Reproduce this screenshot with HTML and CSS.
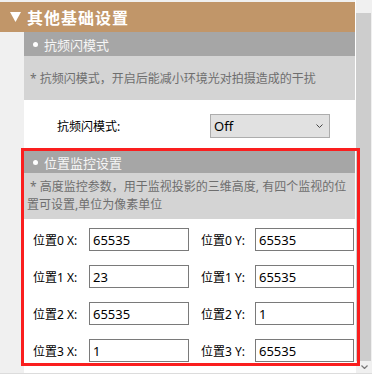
FILE: index.html
```html
<!DOCTYPE html>
<html lang="zh-CN">
<head>
    <meta charset="UTF-8">
    <meta name="viewport" content="width=device-width, initial-scale=1.0">
    <title>其他基础设置</title>
    <link rel="stylesheet" href="styles.css">
</head>
<body>
    <div class="window">
        <div class="main">
            <!-- Group header -->
            <div class="group-head">
                <svg viewBox="0 0 11 10" aria-hidden="true"><polygon points="0,0 11,0 5.5,10" fill="#fff"/></svg>
                <span>其他基础设置</span>
            </div>

            <div class="group-body">
                <!-- Anti flicker -->
                <section class="block">
                    <div class="block-title"><span class="dot"></span>抗频闪模式</div>
                    <div class="block-desc">&nbsp;* 抗频闪模式，开启后能减小环境光对拍摄造成的干扰</div>
                    <div class="field-row">
                        <label>抗频闪模式:</label>
                        <div class="select">
                            <span>Off</span>
                            <svg viewBox="0 0 7 4" aria-hidden="true"><polyline points="0.5,0.5 3.5,3.5 6.5,0.5" fill="none" stroke="#444" stroke-width="1"/></svg>
                        </div>
                    </div>
                </section>

                <!-- Position monitor -->
                <section class="block highlight">
                    <div class="block-title"><span class="dot"></span>位置监控设置</div>
                    <div class="block-desc">&nbsp;* 高度监控参数，用于监视投影的三维高度, 有四个监视的位<br>置可设置,单位为像素单位</div>
                    <div class="pos-grid">
                        <label>位置0 X:</label><input type="text" value="65535">
                        <label class="ylabel">位置0 Y:</label><input type="text" value="65535">
                        <label>位置1 X:</label><input type="text" value="23">
                        <label class="ylabel">位置1 Y:</label><input type="text" value="65535">
                        <label>位置2 X:</label><input type="text" value="65535">
                        <label class="ylabel">位置2 Y:</label><input type="text" value="1">
                        <label>位置3 X:</label><input type="text" value="1">
                        <label class="ylabel">位置3 Y:</label><input type="text" value="65535">
                    </div>
                </section>
            </div>
        </div>

        <!-- Scrollbar -->
        <div class="scrollbar">
            <div class="sb-top"></div>
            <div class="sb-track"></div>
            <div class="sb-bottom">
                <svg viewBox="0 0 7 4" aria-hidden="true"><polyline points="0.5,0.5 3.5,3.5 6.5,0.5" fill="none" stroke="#777" stroke-width="1.2"/></svg>
            </div>
        </div>
    </div>
</body>
</html>
```

FILE: styles.css
```css
* {
    box-sizing: border-box;
}

body {
    margin: 0;
    font-family: "Noto Sans", "Noto Sans CJK SC", sans-serif;
    background-color: #fff;
    color: #000;
}

.window {
    display: flex;
    height: 374px;
    background-color: #f0f0f0;
    border-bottom: 1px solid #dcdcdc;
}

.main {
    width: 355px;
    padding-top: 2px;
}

/* Group header */
.group-head {
    height: 30px;
    display: flex;
    align-items: center;
    padding-left: 10px;
    background-color: #c19669;
    color: #fff;
    font-size: 16px;
    font-weight: bold;
    letter-spacing: 1px;
}

.group-head svg {
    width: 11px;
    height: 10px;
    margin-right: 6px;
}

.group-body {
    margin-left: 24px;
    padding-bottom: 7px;
    background-color: #fff;
}

/* Blocks */
.block-title {
    height: 24px;
    display: flex;
    align-items: center;
    padding-left: 9px;
    background-color: #a6a6a6;
    color: #f6f6f6;
    font-size: 13px;
}

.dot {
    width: 5px;
    height: 5px;
    margin-right: 6px;
    border-radius: 50%;
    background-color: #fff;
}

.block-desc {
    padding: 14px 3px 12px;
    background-color: #d4d4d4;
    color: #6e6e6e;
    font-size: 12px;
    line-height: 18px;
}

.field-row {
    height: 48px;
    display: flex;
    align-items: center;
    padding-top: 4px;
    padding-left: 33px;
    font-size: 12px;
}

.field-row label {
    width: 153px;
}

.select {
    width: 120px;
    height: 24px;
    display: flex;
    align-items: center;
    justify-content: space-between;
    padding: 0 6px 0 3px;
    background-color: #e1e1e1;
    border: 1px solid #adadad;
    font-size: 13px;
}

.select svg {
    width: 7px;
    height: 4px;
}

/* Highlighted block */
.highlight {
    position: relative;
    z-index: 1;
    width: 339px;
    margin-left: -3px;
    border: 3px solid #fa1e1e;
}

.highlight .block-title {
    height: 22px;
    margin-right: 2px;
}

.highlight .block-desc {
    margin-right: 2px;
    padding: 5px 3px;
}

.pos-grid {
    display: grid;
    grid-template-columns: 56px 100px 66px 99px;
    row-gap: 14px;
    align-items: center;
    padding: 9px 0 1px 9px;
    font-size: 12px;
}

.pos-grid .ylabel {
    padding-left: 12px;
}

.pos-grid input {
    width: 100%;
    height: 23px;
    margin: 0;
    padding: 0 3px;
    border: 1px solid #7a7a7a;
    border-radius: 0;
    background-color: #fff;
    color: #000;
    font-family: "Noto Sans", sans-serif;
    font-size: 13px;
}

/* Scrollbar */
.scrollbar {
    width: 17px;
    display: flex;
    flex-direction: column;
    border-left: 1px solid #fff;
}

.sb-top {
    height: 13px;
}

.sb-track {
    flex: 1;
    margin-right: 1px;
    background-color: #cdcdcd;
}

.sb-bottom {
    height: 12px;
    display: flex;
    justify-content: center;
    align-items: center;
}

.sb-bottom svg {
    width: 7px;
    height: 4px;
}
```
